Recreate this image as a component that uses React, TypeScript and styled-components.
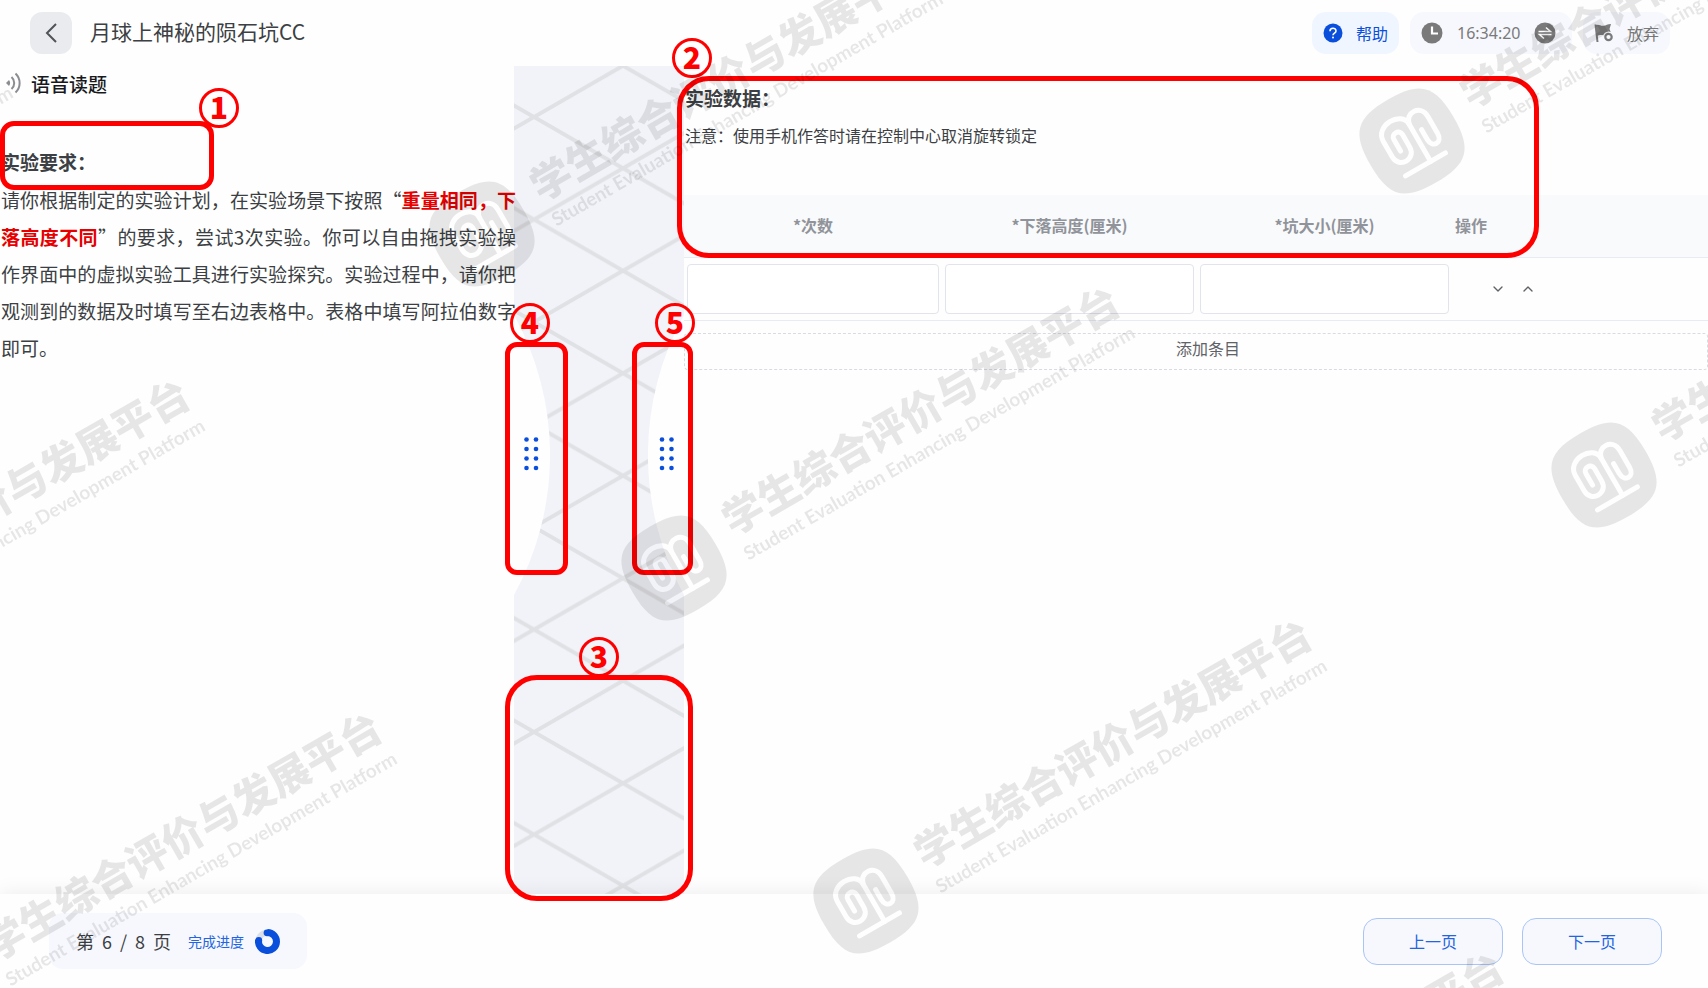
import React from "react";
import styled, { createGlobalStyle } from "styled-components";
import { ChevronDown, ChevronUp } from "lucide-react";

const BLUE = "#0a4fdc";
const LINK = "#2464e0";
const GREY = "#7a7a7a";

const GlobalStyle = createGlobalStyle`
  *, *::before, *::after { box-sizing: border-box; }
  body {
    margin: 0;
    background: #fefefe;
    color: #3c3f43;
    font-family: "Noto Sans CJK SC", "Noto Sans", sans-serif;
    font-size: 16px;
  }
  button, input { font: inherit; color: inherit; }
  button { cursor: pointer; }
`;

const Page = styled.div`
  position: relative;
  display: flex;
  flex-direction: column;
  min-height: 100vh;
  overflow: hidden;
`;

/* ---------- header ---------- */

const Header = styled.header`
  display: flex;
  align-items: center;
  height: 66px;
  padding: 0 38px 0 30px;
`;

const BackButton = styled.button`
  display: grid;
  place-items: center;
  width: 42px;
  height: 42px;
  padding: 0;
  border: 0;
  border-radius: 12px;
  background: #e9ebee;
`;

const Title = styled.h1`
  flex: 1;
  margin: 0 18px;
  padding-bottom: 4px;
  font-size: 21px;
  line-height: 32px;
  font-weight: 400;
`;

const Tools = styled.div`
  display: flex;
  gap: 11px;
`;

const pill = `
  display: flex;
  align-items: center;
  height: 42px;
  padding: 0 11px;
  border: 0;
  border-radius: 14px;
  font-size: 16px;
`;

const ToolButton = styled.button<{ $primary?: boolean }>`
  ${pill}
  gap: 13px;
  color: ${(p) => (p.$primary ? BLUE : GREY)};
  background: ${(p) => (p.$primary ? "#f0f6ff" : "#f6f8fd")};
`;

const Timer = styled.div`
  ${pill}
  gap: 14px;
  width: 162px;
  color: ${GREY};
  background: #f6f8fd;
`;

const Time = styled.time`
  font-family: "Noto Sans", sans-serif;
`;

/* ---------- panes ---------- */

const Main = styled.main`
  flex: 1;
  display: grid;
  grid-template-columns: minmax(0, 514fr) minmax(0, 170fr) minmax(0, 1024fr);
`;

const TaskPane = styled.section`
  position: relative;
  z-index: 1;
  padding-left: 1px;
`;

const VoiceButton = styled.button`
  display: flex;
  align-items: center;
  gap: 9px;
  height: 36px;
  margin-bottom: 42px;
  padding: 0 5px 2px;
  border: 0;
  background: none;
  color: #17191c;
  font-size: 19px;
  font-weight: 500;
`;

const PaneTitle = styled.h2`
  margin: 0;
  font-size: 19px;
  line-height: 36px;
  font-weight: 700;
`;

const TaskText = styled.p`
  margin: 1px -2px 0 0;
  font-size: 19px;
  line-height: 37px;
  text-align: justify;
`;

const Key = styled.strong`
  color: #e60000;
  font-weight: 700;
`;

const Stage = styled.section`
  position: relative;
  display: flex;
  align-items: flex-start;
  justify-content: space-between;
  padding-top: 249px;
  background: #f2f3f9;
`;

const Lattice = styled.svg`
  position: absolute;
  inset: 0;
  width: 100%;
  height: 100%;
`;

const DrawerButton = styled.button`
  position: relative;
  display: block;
  padding: 0;
  border: 0;
  background: none;
  line-height: 0;
`;

const DataPane = styled.section`
  position: relative;
  padding-top: 14px;
`;

const DataIntro = styled.div`
  margin-bottom: 41px;
  padding-left: 1px;
`;

const Note = styled.p`
  margin: 0;
  font-size: 16px;
  line-height: 38px;
`;

const Table = styled.table`
  width: 100%;
  table-layout: fixed;
  border-collapse: separate;
  border-spacing: 0;
`;

const Col = styled.col<{ $w: number }>`
  width: ${(p) => p.$w}%;
`;

const Th = styled.th<{ $left?: boolean }>`
  height: 63px;
  padding: 0 3px 2px;
  border-bottom: 1px solid #e9ebf3;
  background: #f9fafc;
  color: #909399;
  font-size: 16px;
  font-weight: 700;
  text-align: ${(p) => (p.$left ? "left" : "center")};
`;

const Td = styled.td`
  padding: 6px 3px;
  border-bottom: 1px solid #e9ebf3;
`;

const CellInput = styled.input`
  display: block;
  width: 100%;
  height: 50px;
  padding: 0 12px;
  border: 1px solid #e2e4ec;
  border-radius: 4px;
  background: #fff;
`;

const RowTools = styled.div`
  display: flex;
  gap: 14px;
  padding-left: 35px;
`;

const RowButton = styled.button`
  display: grid;
  padding: 0;
  border: 0;
  background: none;
  color: #5f6266;
`;

const AddButton = styled.button`
  display: block;
  width: 100%;
  height: 37px;
  margin-top: 12px;
  padding: 0 0 8px 24px;
  border: 1px dashed #d9dbe3;
  border-radius: 4px;
  background: none;
  color: #606266;
  font-size: 16px;
`;

/* ---------- footer ---------- */

const Footer = styled.footer`
  position: relative;
  display: flex;
  align-items: center;
  justify-content: space-between;
  height: 94px;
  padding: 0 46px 0 49px;
  background: #fefefe;
  box-shadow: 0 0 20px rgba(0, 0, 0, 0.08);
`;

const Progress = styled.div`
  display: flex;
  align-items: center;
  height: 56px;
  padding: 0 27px;
  border-radius: 14px;
  background: #f6f8fe;
  font-size: 18px;
`;

const PageCount = styled.div`
  display: flex;
  gap: 8px;
`;

const ProgressLabel = styled.span`
  margin: 0 11px 0 17px;
  color: ${LINK};
  font-size: 14px;
`;

const Pager = styled.nav`
  display: flex;
  gap: 19px;
`;

const PageButton = styled.button`
  width: 140px;
  height: 47px;
  border: 1px solid #a9c5f7;
  border-radius: 14px;
  background: #f6f8fe;
  color: ${LINK};
  font-size: 16px;
`;

/* ---------- numbered call-outs ---------- */

const Frame = styled.div<{ $round: number }>`
  position: absolute;
  z-index: 2;
  border: 5px solid #f00;
  border-radius: ${(p) => p.$round}px;
  pointer-events: none;
`;
const TitleFrame = styled(Frame)`left: 0; top: 55px; width: 214px; height: 69px;`;
const DataFrame = styled(Frame)`left: -7px; top: 10px; width: 862px; height: 182px;`;
const SceneFrame = styled(Frame)`left: -9px; right: -9px; top: 609px; bottom: -7px;`;
const LeftDrawerFrame = styled(Frame)`left: -9px; top: 276px; width: 63px; height: 233px;`;
const RightDrawerFrame = styled(Frame)`right: -9px; top: 276px; width: 61px; height: 233px;`;

const Badge = styled.span<{ $left: number; $top: number }>`
  position: absolute;
  z-index: 2;
  left: ${(p) => p.$left}px;
  top: ${(p) => p.$top}px;
  display: flex;
  justify-content: center;
  width: 40px;
  height: 40px;
  border: 3px solid #f00;
  border-radius: 50%;
  color: #f00;
  font-family: "Noto Sans CJK SC", sans-serif;
  font-size: 30px;
  line-height: 31px;
  font-weight: 900;
`;

/* ---------- watermark ---------- */

const MarkLayer = styled.div`
  position: absolute;
  inset: 0;
  z-index: 3;
  overflow: hidden;
  opacity: 0.09;
  pointer-events: none;
`;

const Mark = styled.div<{ $x: number; $y: number }>`
  position: absolute;
  left: ${(p) => p.$x - 53}px;
  top: ${(p) => p.$y - 53}px;
  display: flex;
  align-items: center;
  gap: 14px;
  height: 106px;
  color: #000;
  white-space: nowrap;
  transform: rotate(-30deg);
  transform-origin: 53px 53px;
`;

const MarkName = styled.div`
  font-size: 41px;
  line-height: 48px;
  font-weight: 900;
`;

const MarkSub = styled.div`
  padding-left: 1px;
  font-family: Lato, sans-serif;
  font-size: 19px;
  line-height: 32px;
  font-weight: 700;
`;

const MARKS = [
  [-448, 328], [-256, 661], [-64, 994],
  [482, 234], [674, 568], [866, 901], [1058, 1234],
  [1412, 141], [1604, 475],
];

const MarkLogo = () => (
  <svg width="106" height="106" viewBox="-53 -53 106 106">
    <mask id="logo-cut" maskUnits="userSpaceOnUse" x="-53" y="-53" width="106" height="106">
      <rect x="-53" y="-53" width="106" height="106" fill="#fff" />
      <g fill="none" stroke="#000" strokeWidth="5" strokeLinecap="round">
        <path d="M6 27V-16C6-32-25-32-25-14V4C-25 18-5 18-5 4V-10C-5-17-15-17-15-10V3" />
        <path d="M6-16C8-28 26-28 26-13V6C26 17 14 17 14 6V-5" />
        <path d="M-23 27H23" />
      </g>
    </mask>
    <path
      mask="url(#logo-cut)"
      d="M0-48C37-48 48-37 48 0S37 48 0 48-48 37-48 0-37-48 0-48Z"
    />
  </svg>
);

/* ---------- drawings ---------- */

const BackIcon = () => (
  <svg width="14" height="20" viewBox="0 0 14 20" fill="none" stroke="#505358" strokeWidth="2">
    <path d="M12 1 3 10l9 9" />
  </svg>
);

const HelpIcon = () => (
  <svg width="20" height="20" viewBox="0 0 20 20" fill="none">
    <circle cx="10" cy="10" r="9.5" fill={BLUE} />
    <path d="M7 8.2C7 4.4 13 4.4 13 8c0 2-3 2.200-3 4.200" stroke="#fff" strokeWidth="1.600" />
    <circle cx="10" cy="14.600" r="1" fill="#fff" />
  </svg>
);

const ClockIcon = () => (
  <svg width="22" height="22" viewBox="0 0 22 22" fill="none">
    <circle cx="11" cy="11" r="10.500" fill={GREY} />
    <path d="M11 4.500v7h6" stroke="#fff" strokeWidth="2.200" />
  </svg>
);

const SwapIcon = () => (
  <svg width="22" height="22" viewBox="0 0 22 22" fill="none">
    <circle cx="11" cy="11" r="10.500" fill={GREY} />
    <path d="M4.500 9.500h12L12 5.500M17.500 12.500h-12l4.500 4" stroke="#fff" strokeWidth="1.500" />
  </svg>
);

const FlagIcon = () => (
  <svg width="20" height="20" viewBox="0 0 20 20" fill="none">
    <path d="M1.500 1.500l2 17.500" stroke={GREY} strokeWidth="2" />
    <path d="M1.500 2.500c3-2 5 .8 8 .3 2.500-.4 4-1.600 7.500-1.800L15.500 6l1.500 4c-4-.6-5 1.500-7 2-3 .4-4-.5-7 1Z" fill={GREY} />
    <circle cx="14.500" cy="14" r="5.500" fill="#f6f8fd" />
    <circle cx="14.500" cy="14" r="3.200" stroke={GREY} strokeWidth="2.200" />
  </svg>
);

const SoundIcon = () => (
  <svg width="16" height="22" viewBox="0 0 16 22" fill="none" stroke="#8a8d91" strokeWidth="2">
    <path d="M0 11l3-3a5 5 0 0 1 0 6Z" fill="#8a8d91" stroke="none" />
    <path d="M5.500 5a8 8 0 0 1 0 12M9.500 1.500a13 13 0 0 1 0 19" />
  </svg>
);

const RingIcon = () => (
  <svg width="25" height="25" viewBox="0 0 25 25" fill="none">
    <circle cx="12.500" cy="12.500" r="9" stroke="#dcdfe8" strokeWidth="6" />
    <path d="M12.500 3.500a9 9 0 1 1-8.900 7.500" stroke={BLUE} strokeWidth="7" />
    <circle cx="12" cy="3.800" r="3.400" fill={BLUE} />
    <circle cx="3.800" cy="11.500" r="3.400" fill={BLUE} />
  </svg>
);

const LatticeArt = () => (
  <Lattice aria-hidden="true">
    <defs>
      <pattern id="lattice" x="20" y="51" width="178" height="102.500" patternUnits="userSpaceOnUse">
        <path
          d="M-89-51.250 267 153.750M-89 51.250 89 153.750M89-51.250 267 51.250M267-51.250-89 153.750M267 51.250 89 153.750M89-51.250-89 51.250"
          stroke="#e0e1e4"
          strokeWidth="4"
        />
      </pattern>
    </defs>
    <rect width="100%" height="100%" fill="url(#lattice)" />
  </Lattice>
);

const DOT_ROWS = [0, 1, 2, 3];

const DrawerArt = ({ side }: { side: "left" | "right" }) => {
  const dots = side === "left" ? [12.5, 22] : [14, 23.5];
  return (
    <svg width="36" height="280" viewBox="0 0 36 280">
      <path
        d={side === "left" ? "M0 0A290 290 0 0 1 0 280Z" : "M36 0A290 290 0 0 0 36 280Z"}
        fill="#fefefe"
      />
      {DOT_ROWS.map((r) =>
        dots.map((x) => <circle key={`${r}-${x}`} cx={x} cy={124.5 + r * 9.5} r="2.300" fill={BLUE} />)
      )}
    </svg>
  );
};

const COLUMNS = ["*次数", "*下落高度(厘米)", "*坑大小(厘米)"];

export default function App() {
  return (
    <>
      <GlobalStyle />
      <Page>
        <Header>
          <BackButton aria-label="返回"><BackIcon /></BackButton>
          <Title>月球上神秘的陨石坑CC</Title>
          <Tools>
            <ToolButton $primary><HelpIcon />帮助</ToolButton>
            <Timer><ClockIcon /><Time>16:34:20</Time><SwapIcon /></Timer>
            <ToolButton><FlagIcon />放弃</ToolButton>
          </Tools>
        </Header>

        <Main>
          <TaskPane>
            <VoiceButton><SoundIcon />语音读题</VoiceButton>
            <PaneTitle>实验要求：</PaneTitle>
            <TaskText>
              请你根据制定的实验计划，在实验场景下按照“<Key>重量相同，下落高度不同</Key>”的要求，尝试3次实验。你可以自由拖拽实验操作界面中的虚拟实验工具进行实验探究。实验过程中，请你把观测到的数据及时填写至右边表格中。表格中填写阿拉伯数字即可。
            </TaskText>
            <TitleFrame $round={14} />
            <Badge $left={199} $top={22}>1</Badge>
          </TaskPane>

          <Stage>
            <LatticeArt />
            <DrawerButton aria-label="展开左侧"><DrawerArt side="left" /></DrawerButton>
            <DrawerButton aria-label="展开右侧"><DrawerArt side="right" /></DrawerButton>
            <LeftDrawerFrame $round={12} />
            <RightDrawerFrame $round={12} />
            <SceneFrame $round={32} />
            <Badge $left={-4} $top={237}>4</Badge>
            <Badge $left={141} $top={237}>5</Badge>
            <Badge $left={65} $top={571}>3</Badge>
          </Stage>

          <DataPane>
            <DataIntro>
              <PaneTitle>实验数据：</PaneTitle>
              <Note>注意：使用手机作答时请在控制中心取消旋转锁定</Note>
            </DataIntro>
            <Table>
              <colgroup>
                <Col $w={25.2} /><Col $w={24.9} /><Col $w={24.9} /><Col $w={25} />
              </colgroup>
              <thead>
                <tr>
                  {COLUMNS.map((c) => <Th key={c} scope="col">{c}</Th>)}
                  <Th $left scope="col">操作</Th>
                </tr>
              </thead>
              <tbody>
                <tr>
                  {COLUMNS.map((c) => (
                    <Td key={c}><CellInput aria-label={c} /></Td>
                  ))}
                  <Td>
                    <RowTools>
                      <RowButton aria-label="下移"><ChevronDown size={16} /></RowButton>
                      <RowButton aria-label="上移"><ChevronUp size={16} /></RowButton>
                    </RowTools>
                  </Td>
                </tr>
              </tbody>
            </Table>
            <AddButton>添加条目</AddButton>
            <DataFrame $round={32} />
            <Badge $left={-12} $top={-28}>2</Badge>
          </DataPane>
        </Main>

        <Footer>
          <Progress>
            <PageCount>
              <span>第</span><span>6</span><span>/</span><span>8</span><span>页</span>
            </PageCount>
            <ProgressLabel>完成进度</ProgressLabel>
            <RingIcon />
          </Progress>
          <Pager>
            <PageButton>上一页</PageButton>
            <PageButton>下一页</PageButton>
          </Pager>
        </Footer>

        <MarkLayer aria-hidden="true">
          {MARKS.map(([x, y]) => (
            <Mark key={`${x},${y}`} $x={x} $y={y}>
              <MarkLogo />
              <div>
                <MarkName>学生综合评价与发展平台</MarkName>
                <MarkSub>Student Evaluation Enhancing Development Platform</MarkSub>
              </div>
            </Mark>
          ))}
        </MarkLayer>
      </Page>
    </>
  );
}
